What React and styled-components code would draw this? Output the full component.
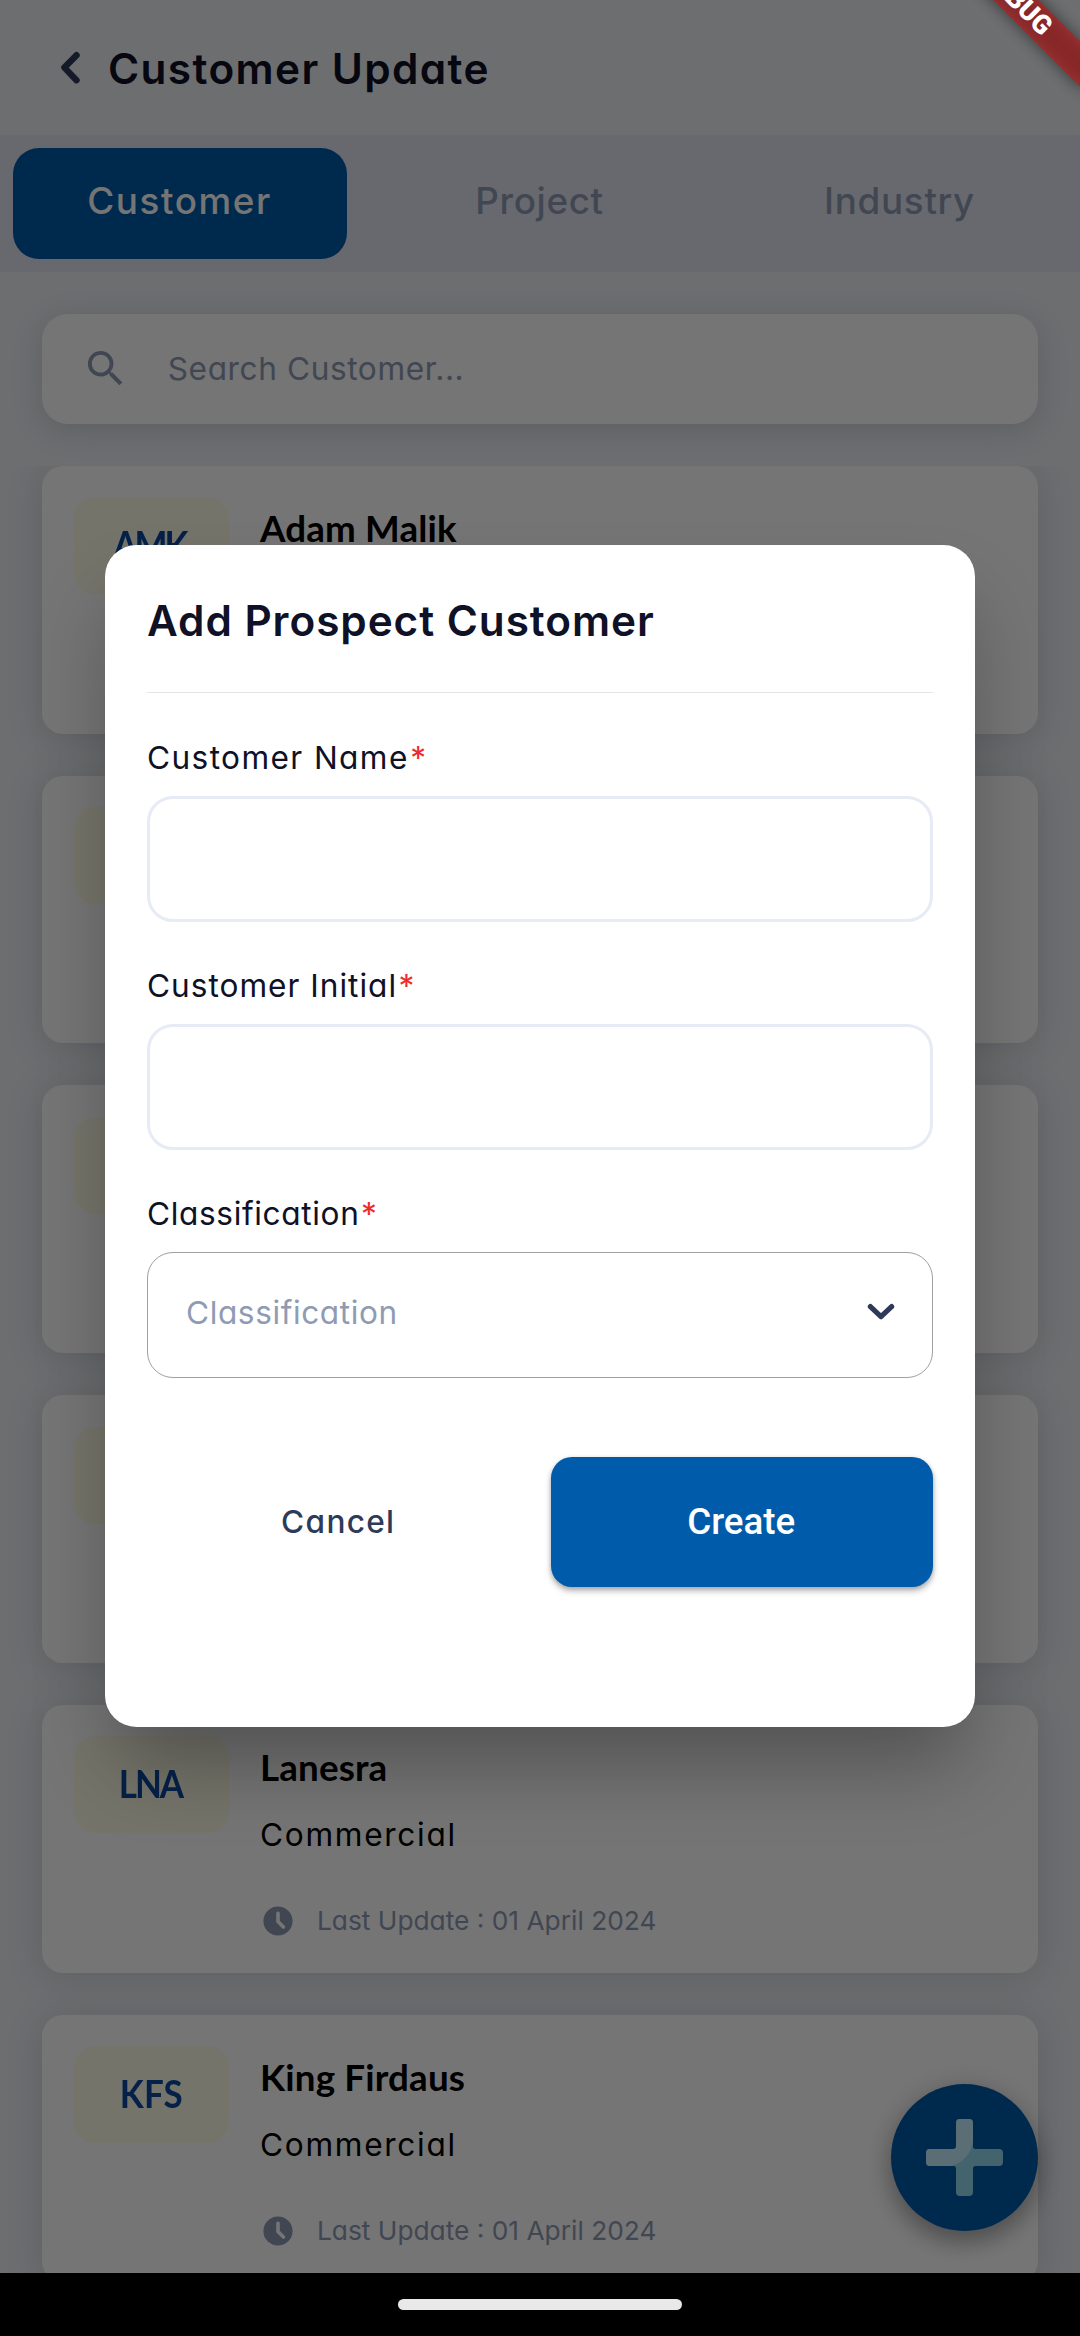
import React from "react";
import styled, { createGlobalStyle } from "styled-components";
import { MdSearch } from "react-icons/md";

const GlobalStyle = createGlobalStyle`
  *, *::before, *::after { box-sizing: border-box; }
  body {
    margin: 0;
    background: #000;
    font-family: Inter, "Open Sans", sans-serif;
    font-feature-settings: "cv11";
  }
  button, input { font: inherit; font-feature-settings: inherit; border: 0; padding: 0; background: none; }
`;

const Screen = styled.div`
  position: relative;
  display: flex;
  flex-direction: column;
  width: 1080px;
  height: 2336px;
  overflow: hidden;
`;

const Page = styled.main`
  position: relative;
  display: flex;
  flex-direction: column;
  height: 2273px;
  overflow: hidden;
  background: #edeff3;
`;

const Header = styled.header`
  display: flex;
  align-items: center;
  gap: 25px;
  height: 135.2px;
  padding-left: 59px;
  color: #2e3a59;
`;

const HeaderTitle = styled.h1`
  margin: 0;
  padding-top: 2px;
  font-size: 42.3px;
  font-weight: 600;
  letter-spacing: 1.4px;
  color: #0f1126;
`;

const Tabs = styled.nav`
  display: grid;
  grid-template-columns: repeat(3, 1fr);
  height: 136.5px;
  padding: 12.8px 0 13px;
  background: #e2e4ef;
`;

const Tab = styled.button`
  margin: 0 13px;
  padding: 0 1px 6px 0;
  border-radius: 26px;
  background: ${(p) => (p.$active ? "#005bab" : "transparent")};
  color: ${(p) => (p.$active ? "#fff" : "#8f9bb3")};
  font-size: 36.8px;
  font-weight: 500;
  letter-spacing: ${(p) => p.$track}px;
`;

const SearchBox = styled.label`
  display: flex;
  flex: none;
  align-items: center;
  gap: 39px;
  height: 110.25px;
  margin: 42px 42px 0;
  padding-left: 39.5px;
  border-radius: 26px;
  background: #fff;
  box-shadow: 0 6px 30px rgba(55, 60, 90, 0.18);
  color: #8f9bb3;

  svg { width: 47.25px; height: 47.25px; }
`;

const SearchHint = styled.span`
  font-size: 31.6px;
  letter-spacing: 0.6px;
`;

const List = styled.section`
  display: flex;
  flex: 1;
  flex-direction: column;
  gap: 42px;
  min-height: 0;
  margin-top: 42px;
  padding: 0 42px;
  overflow: hidden;
`;

const Card = styled.article`
  display: flex;
  flex: none;
  gap: 31.5px;
  height: 267.75px;
  padding: 31.5px;
  border-radius: 21px;
  background: #fff;
  box-shadow: 0 4px 36px rgba(55, 60, 90, 0.18);
`;

const Badge = styled.div`
  display: flex;
  align-items: center;
  justify-content: center;
  width: 155px;
  height: 97px;
  padding-bottom: 3px;
  border-radius: 21px;
  background: #fffde7;
`;

const Initials = styled.span`
  margin-right: ${(p) => -p.$track}px;
  transform: scaleX(0.92);
  color: #0b48a0;
  font: 700 38px Lato, sans-serif;
  letter-spacing: ${(p) => p.$track}px;
`;

const CardBody = styled.div`
  display: flex;
  flex-direction: column;
  padding-top: 9px;
`;

const CardName = styled.h2`
  margin: 0;
  font: 700 36.75px/44px Lato, sans-serif;
  letter-spacing: 0.15px;
  color: #000;
`;

const CardKind = styled.p`
  margin: 24px 0 43px;
  font-size: 31.6px;
  line-height: 44px;
  letter-spacing: 1.7px;
  color: #000;
`;

const CardMeta = styled.div`
  display: flex;
  align-items: center;
  gap: 24px;
  height: 44px;
  padding-left: 3px;
  color: #8f9bb3;
  font-size: 26.3px;
  letter-spacing: 0;
`;

const Fab = styled.button`
  position: absolute;
  right: 42px;
  bottom: 42px;
  display: flex;
  align-items: center;
  justify-content: center;
  width: 147px;
  height: 147px;
  border-radius: 50%;
  background: #005bab;
  box-shadow: 0 12px 22px rgba(0, 0, 0, 0.26), 0 2px 30px rgba(0, 0, 0, 0.14);
`;

const Scrim = styled.div`
  position: absolute;
  inset: 0 0 auto;
  display: flex;
  align-items: center;
  justify-content: center;
  height: 2273px;
  padding-bottom: 1px;
  background: rgba(0, 0, 0, 0.54);
`;

const Dialog = styled.form`
  display: flex;
  flex-direction: column;
  width: 870px;
  height: 1181.25px;
  padding: 42px;
  border-radius: 31.5px;
  background: #fff;
  box-shadow: 0 48px 80px -12px rgba(0, 0, 0, 0.3);
`;

const DialogTitle = styled.h2`
  margin: 0;
  padding-bottom: 38px;
  border-bottom: 1px solid #e2e5e5;
  font-size: 42.3px;
  font-weight: 600;
  line-height: 67px;
  letter-spacing: 0.95px;
  color: #0f1126;
`;

const Field = styled.div`
  display: flex;
  flex-direction: column;
  gap: 18px;
  margin-top: 44.3px;
`;

const Label = styled.label`
  font-size: 31.6px;
  line-height: 40px;
  letter-spacing: ${(p) => p.$track}px;
  color: #0f1126;
`;

const Required = styled.span`
  margin-left: 1.5px;
  color: #ee2a2a;
`;

const TextInput = styled.input`
  height: 126px;
  padding: 0 40px;
  border: 3px solid #e6ebf5;
  border-radius: 26px;
  outline: none;
`;

const Select = styled.div`
  display: flex;
  align-items: center;
  justify-content: space-between;
  height: 126px;
  padding: 0 37.5px 6px 38px;
  border: 1px solid #a0a0a0;
  border-radius: 26px;
  color: #8f9bb3;
  font-size: 31.6px;
  letter-spacing: 0.6px;
`;

const Actions = styled.div`
  display: grid;
  grid-template-columns: 1fr 1fr;
  gap: 21px;
  height: 130px;
  margin-top: 78.5px;
`;

const CancelButton = styled.button`
  color: #2e3a59;
  font-size: 31.6px;
  font-weight: 500;
  letter-spacing: 1.3px;
`;

const CreateButton = styled.button`
  padding-right: 1px;
  border-radius: 21px;
  background: #005bab;
  box-shadow: 0 4px 6px rgba(0, 0, 0, 0.28), 0 1px 4px rgba(0, 0, 0, 0.14);
  color: #fff;
  font: 500 36.75px Roboto, sans-serif;
`;

const Ribbon = styled.div`
  position: absolute;
  top: -15.5px;
  left: 907px;
  display: flex;
  align-items: center;
  justify-content: center;
  width: 220px;
  height: 31.5px;
  transform: rotate(45deg);
  color: #fff;
  font: 900 26.8px/31.5px Roboto, sans-serif;

  &::before, &::after {
    content: "";
    position: absolute;
    inset: 0;
    z-index: -1;
  }
  &::before { background: rgba(0, 0, 0, 0.5); filter: blur(8px); }
  &::after { background: rgba(183, 28, 28, 0.63); }
`;

const SystemBar = styled.footer`
  display: flex;
  justify-content: center;
  height: 63px;
  padding-top: 26px;
  background: #000;
`;

const HomePill = styled.div`
  width: 284px;
  height: 11px;
  border-radius: 6px;
  background: #e9e9e9;
`;

const BackIcon = () => (
  <svg width="24" height="36" viewBox="0 0 24 36" fill="none" stroke="currentColor" strokeWidth="6.4" strokeLinecap="round" strokeLinejoin="round">
    <path d="M17.5 5.2 5.4 17.6 17.5 30.2" />
  </svg>
);

const ChevronDown = () => (
  <svg width="28" height="18" viewBox="0 0 28 18" fill="none" stroke="#2e3a59" strokeWidth="5.2" strokeLinecap="round" strokeLinejoin="round">
    <path d="M3.4 3.6 14 13.6 24.6 3.6" />
  </svg>
);

const ClockIcon = () => (
  <svg width="30" height="30" viewBox="0 0 30 30" fill="none">
    <circle cx="15" cy="15" r="14.6" fill="#8f9bb3" />
    <path d="M15 7.2V15.6L20.4 21" stroke="#fff" strokeWidth="3.6" strokeLinecap="round" strokeLinejoin="round" />
  </svg>
);

const PlusIcon = () => (
  <svg width="77" height="77" viewBox="0 0 77 77">
    <clipPath id="plus-shape">
      <path d="M34 0H43a4 4 0 0 1 4 4V27.5a2.5 2.5 0 0 0 2.5 2.5H73a4 4 0 0 1 4 4V43a4 4 0 0 1-4 4H49.5a2.5 2.5 0 0 0-2.5 2.5V73a4 4 0 0 1-4 4H34a4 4 0 0 1-4-4V49.5a2.5 2.5 0 0 0-2.5-2.5H4a4 4 0 0 1-4-4V34a4 4 0 0 1 4-4H27.5a2.5 2.5 0 0 0 2.5-2.5V4a4 4 0 0 1 4-4Z" />
    </clipPath>
    <g clipPath="url(#plus-shape)">
      <rect width="77" height="77" fill="#92d9ed" />
      <path d="M0 0H47V20A28 28 0 0 1 19 47.5H0Z" fill="#c6effe" />
    </g>
  </svg>
);

const tabs = [
  { name: "Customer", track: 1.6 },
  { name: "Project", track: 0.65 },
  { name: "Industry", track: 0.7 },
];

const customers = [
  { initial: "AMK", name: "Adam Malik", track: -3.3 },
  {},
  {},
  {},
  { initial: "LNA", name: "Lanesra", track: -2.2 },
  { initial: "KFS", name: "King Firdaus", track: 0.2 },
];

export default function App() {
  return (
    <>
      <GlobalStyle />
      <Screen>
        <Page>
          <Header>
            <BackIcon />
            <HeaderTitle>Customer Update</HeaderTitle>
          </Header>
          <Tabs>
            {tabs.map((tab, i) => (
              <Tab key={tab.name} $active={i === 0} $track={tab.track}>{tab.name}</Tab>
            ))}
          </Tabs>
          <SearchBox>
            <MdSearch />
            <SearchHint>Search Customer...</SearchHint>
          </SearchBox>
          <List>
            {customers.map((c, i) => (
              <Card key={i}>
                <Badge>{c.initial && <Initials $track={c.track}>{c.initial}</Initials>}</Badge>
                {c.name && (
                  <CardBody>
                    <CardName>{c.name}</CardName>
                    {i > 0 && (
                      <>
                        <CardKind>Commercial</CardKind>
                        <CardMeta><ClockIcon />Last Update : 01 April 2024</CardMeta>
                      </>
                    )}
                  </CardBody>
                )}
              </Card>
            ))}
          </List>
          <Fab><PlusIcon /></Fab>
        </Page>
        <SystemBar><HomePill /></SystemBar>
        <Scrim>
          <Dialog>
            <DialogTitle>Add Prospect Customer</DialogTitle>
            <Field>
              <Label $track={1.4}>Customer Name<Required>*</Required></Label>
              <TextInput />
            </Field>
            <Field>
              <Label $track={1}>Customer Initial<Required>*</Required></Label>
              <TextInput />
            </Field>
            <Field>
              <Label $track={0.65}>Classification<Required>*</Required></Label>
              <Select>Classification<ChevronDown /></Select>
            </Field>
            <Actions>
              <CancelButton type="button">Cancel</CancelButton>
              <CreateButton type="button">Create</CreateButton>
            </Actions>
          </Dialog>
        </Scrim>
        <Ribbon>DEBUG</Ribbon>
      </Screen>
    </>
  );
}
